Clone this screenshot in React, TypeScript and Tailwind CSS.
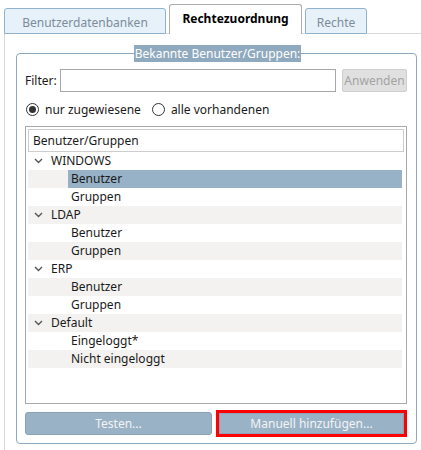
import React from "react";

const font = { fontFamily: '"Noto Sans", "Open Sans", sans-serif' };

function Chevron() {
  return (
    <svg width="9" height="6" viewBox="0 0 9 6" className="shrink-0">
      <path d="M1 1 L4.5 4.5 L8 1" fill="none" stroke="#555" strokeWidth="1.4" />
    </svg>
  );
}

type Row = { label: string; level: 0 | 1; selected?: boolean };

const rows: Row[] = [
  { label: "WINDOWS", level: 0 },
  { label: "Benutzer", level: 1, selected: true },
  { label: "Gruppen", level: 1 },
  { label: "LDAP", level: 0 },
  { label: "Benutzer", level: 1 },
  { label: "Gruppen", level: 1 },
  { label: "ERP", level: 0 },
  { label: "Benutzer", level: 1 },
  { label: "Gruppen", level: 1 },
  { label: "Default", level: 0 },
  { label: "Eingeloggt*", level: 1 },
  { label: "Nicht eingeloggt", level: 1 },
];

export default function App() {
  return (
    <div
      className="w-[421px] h-[450px] bg-white overflow-hidden flex flex-col text-[12px] text-[#1a1a1a]"
      style={font}
    >
      {/* Tabs */}
      <div className="flex items-end pl-[4px] pt-[4px] relative z-10">
        <div className="w-[162px] h-[26px] border border-[#8fb3cc] rounded-t-[3px] bg-[#e6f1f9] flex items-center justify-center text-[#7d8c99] -mb-px pt-[3px]">
          Benutzerdatenbanken
        </div>
        <div className="ml-[3px] w-[133px] h-[30px] border border-b-0 border-[#adadad] rounded-t-[3px] bg-white flex items-center justify-center font-bold text-black -mb-px pb-[1px]">
          Rechtezuordnung
        </div>
        <div className="ml-[3px] w-[62px] h-[26px] border border-[#8fb3cc] rounded-t-[3px] bg-[#e6f1f9] flex items-center justify-center text-[#7d8c99] -mb-px pt-[3px]">
          Rechte
        </div>
      </div>

      {/* Panel */}
      <div className="ml-[4px] flex-1 border-l border-t border-[#d9d9d9] pl-[11px] pt-[19px]">
        <div className="relative w-[401px] h-[391px] border border-[#8ea9bf] rounded-[4px] flex flex-col px-[8px] pt-[15px]">
          <div className="absolute left-[117px] top-[-9px] h-[17px] w-[167px] bg-[#8fa9be] text-white flex items-center justify-center">
            Bekannte Benutzer/Gruppen:
          </div>

          {/* Filter row */}
          <div className="flex items-center h-[23px]">
            <span className="w-[35px]">Filter:</span>
            <div className="w-[276px] h-[23px] border border-[#a8a8a8] bg-white" />
            <div className="ml-[6px] w-[65px] h-[23px] border border-[#cfcfcf] rounded-[2px] bg-[#e0e0e0] text-[#a3a3a3] flex items-center justify-center">
              Anwenden
            </div>
          </div>

          {/* Radios */}
          <div className="flex items-center h-[17px] mt-[9px] pl-[1px]">
            <span className="w-[13px] h-[13px] rounded-full border border-[#333] flex items-center justify-center">
              <span className="w-[7px] h-[7px] rounded-full bg-[#333]" />
            </span>
            <span className="ml-[6px]">nur zugewiesene</span>
            <span className="ml-[11px] w-[13px] h-[13px] rounded-full border border-[#333]" />
            <span className="ml-[6px]">alle vorhandenen</span>
          </div>

          {/* Tree */}
          <div className="mt-[8px] w-[382px] h-[278px] border border-[#a9a9a9] bg-white p-[2px] flex flex-col">
            <div className="h-[23px] border border-[#cdcdcd] flex items-center pl-[4px]">
              Benutzer/Gruppen
            </div>
            <div className="flex flex-col pr-[2px]">
              {rows.map((r, i) => (
                <div
                  key={i}
                  className={
                    "h-[18px] flex items-center " +
                    (i % 2 === 1 ? "bg-[#f3f2f0]" : "bg-white")
                  }
                >
                  {r.level === 0 ? (
                    <div className="flex items-center pl-[6px]">
                      <Chevron />
                      <span className="ml-[8px]">{r.label}</span>
                    </div>
                  ) : (
                    <div
                      className={
                        "ml-[40px] flex-1 h-full flex items-center pl-[3px] " +
                        (r.selected ? "bg-[#97b1c6]" : "")
                      }
                    >
                      {r.label}
                    </div>
                  )}
                </div>
              ))}
            </div>
          </div>

          {/* Buttons */}
          <div className="mt-[6px] flex items-center">
            <div className="w-[187px] h-[23px] rounded-[3px] border border-[#8aa2b6] bg-[#9ab2c6] text-[#f4f4f4] flex items-center justify-center">
              Testen...
            </div>
            <div className="ml-[4px] p-[3px] bg-[#ff0000]">
              <div className="w-[185px] h-[21px] border border-[#8aa2b6] bg-[#9ab2c6] text-[#f4f4f4] flex items-center justify-center">
                Manuell hinzufügen...
              </div>
            </div>
          </div>
        </div>
      </div>
    </div>
  );
}
